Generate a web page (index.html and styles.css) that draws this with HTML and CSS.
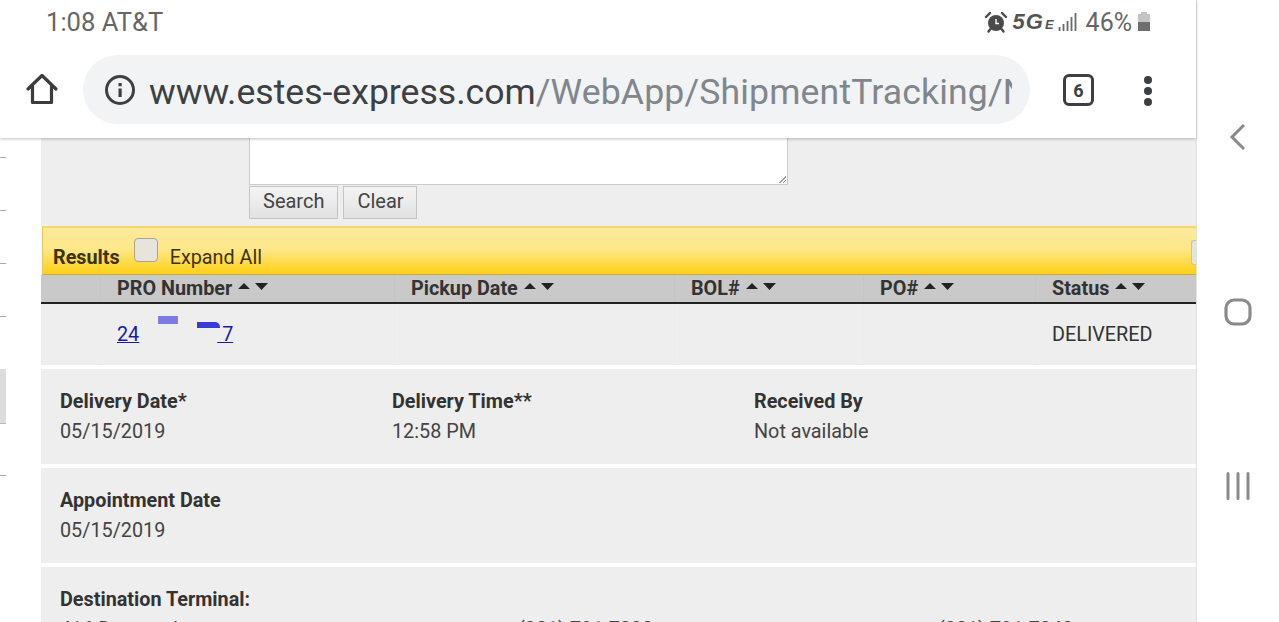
FILE: index.html
```html
<!DOCTYPE html>
<html lang="en">
<head>
  <meta charset="UTF-8">
  <meta name="viewport" content="width=device-width, initial-scale=1.0">
  <title>Shipment Tracking</title>
  <link rel="stylesheet" href="styles.css">
</head>
<body>

  <div class="phone">
    <div class="browser-chrome">
      <div class="status-bar">
        <span>1:08 AT&amp;T</span>
        <div class="status-right">
          <svg class="alarm" width="24" height="22" viewBox="0 0 24 22">
            <circle cx="12" cy="12" r="8" fill="#4a4a4a"/>
            <path d="M2 6 L6 2 M22 6 L18 2 M6.500 18 L4.500 20.500 M17.500 18 L19.500 20.500" stroke="#4a4a4a" stroke-width="2.400" stroke-linecap="round"/>
            <path d="M12 8 V12.500 H15" stroke="#fff" stroke-width="1.400" fill="none"/>
          </svg>
          <span class="net">5G<small>E</small></span>
          <svg width="20" height="22" viewBox="0 0 20 22">
            <path d="M1.500 16v4M5.500 13v7M9.500 10v10M13.500 6v14M17.500 2v18" stroke="#6a6a6a" stroke-width="1.800"/>
          </svg>
          <span class="pct">46%</span>
          <svg width="14" height="22" viewBox="0 0 14 22">
            <path d="M4 1h6v2h3v8H1V3h3z" fill="#c4c4c4"/>
            <rect x="1" y="11" width="12" height="9" fill="#6e6e6e"/>
          </svg>
        </div>
      </div>
      <div class="toolbar">
        <svg class="home-icon" width="34" height="34" viewBox="0 0 34 34">
          <path d="M3 17 L17 3.500 L31 17 M7.500 14 V30.500 H26.500 V14" fill="none" stroke="#3c3c3c" stroke-width="3.200" stroke-linejoin="round" stroke-linecap="round"/>
        </svg>
        <div class="url-pill">
          <svg class="info-icon" width="32" height="32" viewBox="0 0 32 32">
            <circle cx="16" cy="16" r="13.500" fill="none" stroke="#3c4043" stroke-width="3"/>
            <rect x="14.500" y="14.500" width="3.200" height="8.500" fill="#3c4043"/>
            <rect x="14.500" y="9" width="3.200" height="3.200" fill="#3c4043"/>
          </svg>
          <div class="url"><span class="host">www.estes-express.com</span>/WebApp/ShipmentTracking/N</div>
        </div>
        <div class="tab-count">6</div>
        <div class="menu-dots"><i></i><i></i><i></i></div>
      </div>
    </div>

    <div class="page">
      <div class="rail">
        <i class="tick"></i>
        <i class="tick"></i>
        <i class="tick"></i>
        <i class="tick"></i>
        <i class="rail-block"></i>
        <i class="tick tick-low"></i>
      </div>

      <div class="content">
        <div class="search-box">
          <div class="textarea"></div>
          <div class="search-buttons">
            <button>Search</button>
            <button>Clear</button>
          </div>
        </div>

        <div class="results-bar">
          <strong>Results</strong>
          <span class="checkbox"></span>
          <span class="expand">Expand All</span>
          <span class="bar-btn"></span>
        </div>

        <div class="table-head">
          <div class="cell"></div>
          <div class="cell">PRO Number <svg class="sort" width="32" height="10" viewBox="0 0 32 10"><path d="M1 8 L7 2 L13 8Z M18 2 H31 L24.500 9Z" fill="#222"/></svg></div>
          <div class="cell">Pickup Date <svg class="sort" width="32" height="10" viewBox="0 0 32 10"><path d="M1 8 L7 2 L13 8Z M18 2 H31 L24.500 9Z" fill="#222"/></svg></div>
          <div class="cell">BOL# <svg class="sort" width="32" height="10" viewBox="0 0 32 10"><path d="M1 8 L7 2 L13 8Z M18 2 H31 L24.500 9Z" fill="#222"/></svg></div>
          <div class="cell">PO# <svg class="sort" width="32" height="10" viewBox="0 0 32 10"><path d="M1 8 L7 2 L13 8Z M18 2 H31 L24.500 9Z" fill="#222"/></svg></div>
          <div class="cell">Status <svg class="sort" width="32" height="10" viewBox="0 0 32 10"><path d="M1 8 L7 2 L13 8Z M18 2 H31 L24.500 9Z" fill="#222"/></svg></div>
        </div>

        <div class="table-row">
          <div class="cell"></div>
          <div class="cell pro-cell">
            <a href="#" class="pro-start">24</a>
            <i class="mark mark-a"></i>
            <i class="mark mark-b"></i>
            <a href="#">&nbsp;7</a>
          </div>
          <div class="cell"></div>
          <div class="cell"></div>
          <div class="cell"></div>
          <div class="cell">DELIVERED</div>
        </div>

        <div class="panel delivery">
          <div><b>Delivery Date*</b><p>05/15/2019</p></div>
          <div><b>Delivery Time**</b><p>12:58 PM</p></div>
          <div><b>Received By</b><p>Not available</p></div>
        </div>

        <div class="panel">
          <div><b>Appointment Date</b><p>05/15/2019</p></div>
        </div>

        <div class="panel terminal">
          <b>Destination Terminal:</b>
          <div class="terminal-line">
            <span>416 Dorwood</span>
            <span>(301) 791-7030</span>
            <span>(301) 791-7040</span>
          </div>
        </div>
      </div>
    </div>
  </div>

  <div class="nav-bar">
    <svg width="20" height="30" viewBox="0 0 20 30"><path d="M16 3 L4 15 L16 27" fill="none" stroke="#8a8a8a" stroke-width="3"/></svg>
    <svg width="30" height="30" viewBox="0 0 30 30"><rect x="3" y="3" width="24" height="24" rx="8" fill="none" stroke="#8a8a8a" stroke-width="3.200"/></svg>
    <svg width="26" height="28" viewBox="0 0 26 28"><path d="M3 1.500 V26.500 M13 1.500 V26.500 M23 1.500 V26.500" stroke="#8a8a8a" stroke-width="3" stroke-linecap="round"/></svg>
  </div>

</body>
</html>
```

FILE: styles.css
```css
* {
  box-sizing: border-box;
}

html, body {
  height: 100%;
}

body {
  margin: 0;
  display: flex;
  height: 622px;
  overflow: hidden;
  background-color: #fff;
  color: #333;
  font-family: Roboto, "Liberation Sans", sans-serif;
  font-size: 19.8px;
}

.phone {
  width: 1197px;
  display: flex;
  flex-direction: column;
  border-right: 1px solid #e2e2e2;
}

.browser-chrome {
  height: 138px;
  flex-shrink: 0;
  background-color: #fff;
  box-shadow: 0 1px 3px rgba(0, 0, 0, 0.25);
  position: relative;
  z-index: 2;
}

.status-bar {
  height: 44px;
  padding: 0 45px 0 46px;
  display: flex;
  justify-content: space-between;
  align-items: center;
  color: #666;
  font-size: 25.6px;
}

.status-right {
  display: flex;
  align-items: center;
  gap: 3px;
}

.net {
  font-family: "Liberation Sans", sans-serif;
  font-size: 22px;
  font-weight: bold;
  font-style: italic;
  color: #555;
  margin-left: 2px;
  letter-spacing: 1px;
}

.net small {
  font-size: 13px;
  margin-left: 1px;
}

.pct {
  margin: 0 2px 0 5px;
  font-size: 25px;
}

.toolbar {
  height: 94px;
  display: flex;
  align-items: center;
  padding-bottom: 4px;
}

.home-icon {
  margin: 0 24px 0 25px;
}

.url-pill {
  width: 947px;
  height: 69px;
  border-radius: 35px;
  background-color: #f1f3f4;
  display: flex;
  align-items: center;
  padding-left: 21px;
  gap: 13px;
}

.info-icon {
  margin-top: 2px;
}

.url {
  width: 863px;
  overflow: hidden;
  white-space: nowrap;
  font-size: 35.6px;
  letter-spacing: 0.15px;
  color: #80868b;
  padding-top: 5px;
}

.host {
  color: #3c4043;
  letter-spacing: 0;
}

.tab-count {
  width: 31px;
  height: 32px;
  margin: 2px 0 0 33px;
  border: 3px solid #3c4043;
  border-radius: 6px;
  display: flex;
  align-items: center;
  justify-content: center;
  font-size: 18px;
  font-weight: bold;
  color: #3c4043;
}

.menu-dots {
  margin: 3px 0 0 50px;
  display: flex;
  flex-direction: column;
  gap: 3px;
}

.menu-dots i {
  width: 8px;
  height: 8px;
  border-radius: 50%;
  background-color: #3c4043;
}

.page {
  flex: 1;
  display: flex;
  min-height: 0;
  overflow: hidden;
}

.rail {
  width: 41px;
  flex-shrink: 0;
  display: flex;
  flex-direction: column;
  align-items: flex-start;
  padding-top: 19px;
}

.tick {
  width: 6px;
  height: 1px;
  background-color: #aaa;
  margin-bottom: 52px;
}

.rail-block {
  width: 6px;
  height: 55px;
  margin-bottom: 51px;
  background-color: #ddd;
  border-bottom: 1px solid #bbb;
}

.content {
  flex: 1;
  min-width: 0;
}

.search-box {
  height: 88px;
  background-color: #eee;
  padding-left: 208px;
}

.textarea {
  width: 539px;
  height: 47px;
  position: relative;
  background-color: #fff;
  border: 1px solid #ccc;
  border-top: none;
}

.textarea::after {
  content: "";
  position: absolute;
  right: 1px;
  bottom: 1px;
  width: 7px;
  height: 7px;
  background: linear-gradient(135deg, transparent 50%, #999 50%, #999 60%, transparent 60%, transparent 75%, #999 75%, #999 85%, transparent 85%);
}

.search-buttons {
  display: flex;
  gap: 5px;
  margin-top: 1px;
}

.search-buttons button {
  height: 33px;
  padding: 0 13px 3px;
  border: 1px solid #c4c4c4;
  background: linear-gradient(#f4f4f4, #e2e2e2);
  color: #444;
  font-family: inherit;
  font-size: 20px;
}

.search-buttons button:last-child {
  width: 74px;
}

.results-bar {
  height: 49px;
  margin-left: 1px;
  position: relative;
  display: flex;
  align-items: flex-end;
  padding: 0 0 5px 10px;
  border-top: 2px solid #f5d76a;
  border-left: 1px solid #f0c94a;
  border-bottom: 1px solid #c8a93c;
  background: linear-gradient(#fde99c, #fee88a 45%, #fdd21f 95%);
  color: #3b3312;
}

.results-bar strong {
  font-weight: 700;
}

.checkbox {
  width: 24px;
  height: 24px;
  margin: 0 12px 7px 14px;
  border: 1px solid #a8a490;
  border-radius: 4px;
  background-color: #e6e4dc;
}

.expand {
  font-size: 19.8px;
}

.bar-btn {
  position: absolute;
  right: 0;
  top: 12px;
  width: 5px;
  height: 25px;
  border-radius: 3px 0 0 3px;
  background-color: #dde6e4;
  border: 1px solid #c8c4a0;
  border-right: none;
}

.table-head, .table-row {
  display: grid;
  grid-template-columns: 59px 294px 280px 189px 172px 1fr;
}

.table-head {
  height: 29px;
  align-items: center;
  background-color: #c9c9c9;
  border-bottom: 2px solid #222;
  font-weight: 700;
  color: #333;
}

.table-head .cell {
  padding-left: 16px;
  height: 100%;
  display: flex;
  align-items: center;
  gap: 5px;
  white-space: nowrap;
  border-left: 1px solid #c5c5c5;
  padding-bottom: 1px;
}

.table-head .cell:first-child {
  border-left: none;
}

.sort {
  margin-top: -4px;
}

.table-row {
  height: 61px;
  background-color: #eee;
}

.table-row .cell {
  padding-left: 16px;
  display: flex;
  align-items: center;
  border-left: 1px solid #ececec;
  padding-bottom: 1px;
}

.table-row .cell:first-child {
  border-left: none;
}

.pro-cell a {
  color: #1a1aa6;
}

.pro-start {
  padding-right: 2px;
}

.mark {
  display: block;
  height: 8px;
  margin-top: -29px;
}

.mark-a {
  width: 20px;
  margin-left: 17px;
  background-color: #7d7dea;
}

.mark-b {
  width: 23px;
  margin-left: 19px;
  margin-right: -3px;
  margin-top: -19px;
  height: 6px;
  background-color: #3a3ad6;
  border-top-right-radius: 5px;
}

.panel {
  margin-top: 4px;
  height: 95px;
  padding: 21px 0 0 19px;
  background-color: #eee;
  display: flex;
}

.panel.delivery > div:nth-child(1) {
  width: 332px;
}

.panel.delivery > div:nth-child(2) {
  width: 362px;
}

.panel b {
  display: block;
  font-weight: 700;
  color: #333;
  line-height: 24px;
}

.panel p {
  margin: 6px 0 0;
  line-height: 24px;
  color: #444;
}

.panel.terminal {
  display: block;
}

.terminal-line {
  display: flex;
  margin-top: 6px;
  line-height: 24px;
  color: #444;
}

.terminal-line span:nth-child(1) {
  width: 458px;
}

.terminal-line span:nth-child(2) {
  width: 420px;
}

.nav-bar {
  flex: 1;
  display: flex;
  flex-direction: column;
  align-items: center;
  padding-top: 122px;
  gap: 145px;
}
```
